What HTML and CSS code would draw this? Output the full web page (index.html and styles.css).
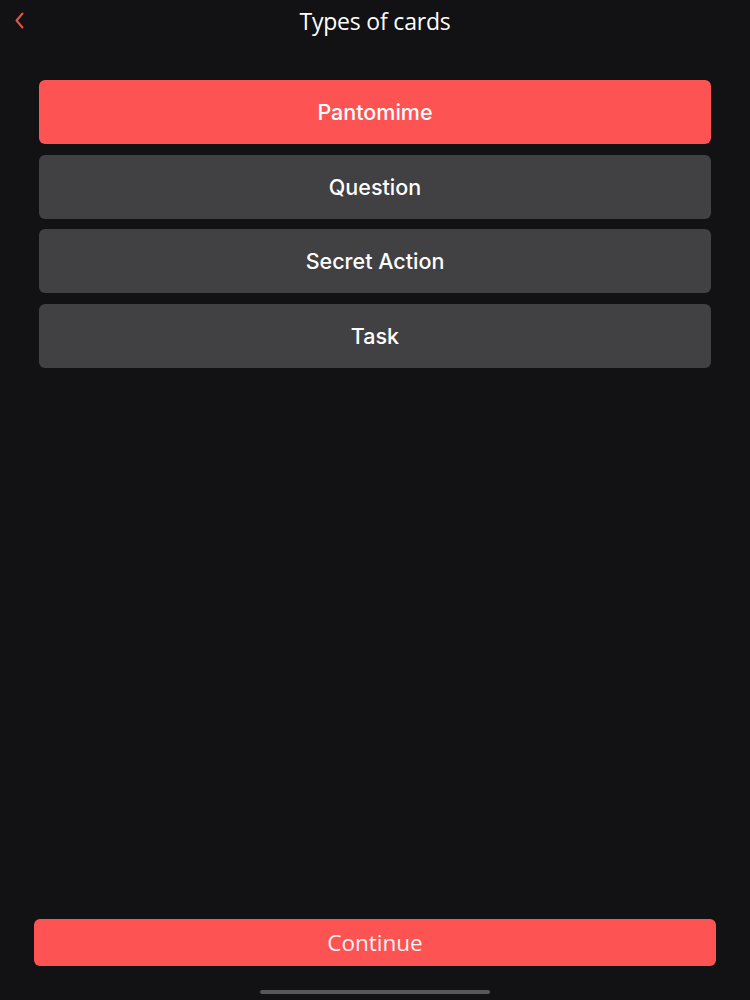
FILE: index.html
```html
<!DOCTYPE html>
<html lang="en">
<head>
  <meta charset="UTF-8">
  <title>Types of cards</title>
  <link rel="stylesheet" href="styles.css">
</head>
<body>

<div class="pantalla">
  <header class="cabecera">
    <a class="volver" href="#">
      <svg width="11" height="17" viewBox="0 0 11 17">
        <path d="M8.5 1.5 L2.5 8.5 L8.5 15.5" fill="none" stroke="#e8534f" stroke-width="2" stroke-linecap="round" stroke-linejoin="round"/>
      </svg>
    </a>
    <h1>Types of cards</h1>
  </header>

  <div class="tipos">
    <button class="tipo activo">Pantomime</button>
    <button class="tipo">Question</button>
    <button class="tipo">Secret Action</button>
    <button class="tipo">Task</button>
  </div>

  <div class="pie">
    <button class="continuar">Continue</button>
    <div class="indicador"></div>
  </div>
</div>

</body>
</html>
```

FILE: styles.css
```css
body {
  margin: 0;
  background: #121114;
  color: #fff;
  font-family: "Open Sans", sans-serif;
}
.pantalla {
  height: 1000px;
  display: flex;
  flex-direction: column;
}
.cabecera {
  position: relative;
  height: 42px;
  display: flex;
  align-items: center;
  justify-content: center;
}
.cabecera h1 {
  margin: 0;
  font-size: 23px;
  font-weight: 400;
  letter-spacing: -0.2px;
  color: #fff;
}
.volver {
  position: absolute;
  left: 14px;
  top: 12px;
  display: flex;
}
.tipos {
  display: flex;
  flex-direction: column;
  gap: 10.5px;
  margin: 38px 39px 0;
}
.tipo {
  height: 64px;
  border: none;
  border-radius: 6px;
  background: #414043;
  color: #fff;
  font-family: Inter, sans-serif;
  font-size: 21.5px;
  font-weight: 500;
  cursor: pointer;
}
.tipo.activo {
  background: #fd5353;
}
.pie {
  margin-top: auto;
  display: flex;
  flex-direction: column;
  align-items: center;
}
.continuar {
  width: 682px;
  height: 47px;
  border: none;
  border-radius: 6px;
  background: #fd5353;
  color: #fff3f3;
  font-family: "Open Sans", sans-serif;
  font-size: 22.5px;
  cursor: pointer;
}
.indicador {
  width: 230px;
  height: 4px;
  border-radius: 2px;
  background: #58575b;
  margin: 24px 0 6px;
}
```
